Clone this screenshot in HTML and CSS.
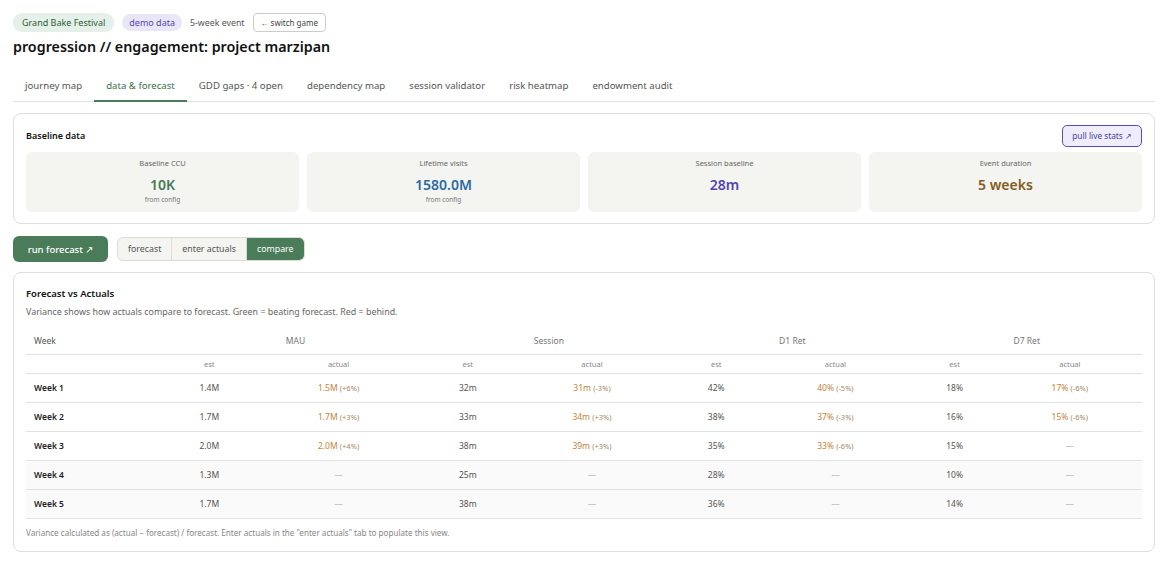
FILE: index.html
```html
<!DOCTYPE html>
<html lang='en'>
<head>
    <meta charset='UTF-8'>
    <title>Forecast</title>
    <link rel="stylesheet" href="styles.css">
</head>
<body>
    <div class='page'>
        <div class='meta-row'>
            <span class='pill pill-game'>Grand Bake Festival</span>
            <span class='pill pill-demo'>demo data</span>
            <span class='meta-text'>5-week event</span>
            <button class='switch-btn'>&larr; switch game</button>
        </div>
        <h1 class='title'>progression // engagement: project marzipan</h1>

        <div class='tabs'>
            <span class='tab'>journey map</span>
            <span class='tab active'>data &amp; forecast</span>
            <span class='tab'>GDD gaps &middot; 4 open</span>
            <span class='tab'>dependency map</span>
            <span class='tab'>session validator</span>
            <span class='tab'>risk heatmap</span>
            <span class='tab'>endowment audit</span>
        </div>

        <div class='card baseline'>
            <div class='card-head'>
                <span class='card-title'>Baseline data</span>
                <button class='live-btn'>pull live stats &#x2197;</button>
            </div>
            <div class='stats'>
                <div class='stat'>
                    <span class='stat-label'>Baseline CCU</span>
                    <span class='stat-value green'>10K</span>
                    <span class='stat-note'>from config</span>
                </div>
                <div class='stat'>
                    <span class='stat-label'>Lifetime visits</span>
                    <span class='stat-value blue'>1580.0M</span>
                    <span class='stat-note'>from config</span>
                </div>
                <div class='stat'>
                    <span class='stat-label'>Session baseline</span>
                    <span class='stat-value purple'>28m</span>
                </div>
                <div class='stat'>
                    <span class='stat-label'>Event duration</span>
                    <span class='stat-value brown'>5 weeks</span>
                </div>
            </div>
        </div>

        <div class='actions'>
            <button class='run-btn'>run forecast &#x2197;</button>
            <div class='segments'>
                <span class='segment'>forecast</span>
                <span class='segment'>enter actuals</span>
                <span class='segment active'>compare</span>
            </div>
        </div>

        <div class='card compare'>
            <div class='card-title'>Forecast vs Actuals</div>
            <p class='card-sub'>Variance shows how actuals compare to forecast. Green = beating forecast. Red = behind.</p>
            <table class='grid'>
                <colgroup>
                    <col class='c-week'>
                    <col class='c-est'><col class='c-mau'>
                    <col class='c-est'><col class='c-ses'>
                    <col class='c-est'><col class='c-d1'>
                    <col class='c-est'><col class='c-d7'>
                </colgroup>
                <thead>
                    <tr class='group-row'>
                        <th class='week-head'>Week</th>
                        <th colspan='2'>MAU</th>
                        <th colspan='2'>Session</th>
                        <th colspan='2'>D1 Ret</th>
                        <th colspan='2'>D7 Ret</th>
                    </tr>
                    <tr class='sub-row'>
                        <th></th>
                        <th>est</th><th>actual</th>
                        <th>est</th><th>actual</th>
                        <th>est</th><th>actual</th>
                        <th>est</th><th>actual</th>
                    </tr>
                </thead>
                <tbody>
                    <tr>
                        <td class='week'>Week 1</td>
                        <td>1.4M</td><td class='act'>1.5M <small>(+6%)</small></td>
                        <td>32m</td><td class='act'>31m <small>(-3%)</small></td>
                        <td>42%</td><td class='act'>40% <small>(-5%)</small></td>
                        <td>18%</td><td class='act'>17% <small>(-6%)</small></td>
                    </tr>
                    <tr>
                        <td class='week'>Week 2</td>
                        <td>1.7M</td><td class='act'>1.7M <small>(+3%)</small></td>
                        <td>33m</td><td class='act'>34m <small>(+3%)</small></td>
                        <td>38%</td><td class='act'>37% <small>(-3%)</small></td>
                        <td>16%</td><td class='act'>15% <small>(-6%)</small></td>
                    </tr>
                    <tr>
                        <td class='week'>Week 3</td>
                        <td>2.0M</td><td class='act'>2.0M <small>(+4%)</small></td>
                        <td>38m</td><td class='act'>39m <small>(+3%)</small></td>
                        <td>35%</td><td class='act'>33% <small>(-6%)</small></td>
                        <td>15%</td><td class='empty'>&mdash;</td>
                    </tr>
                    <tr class='pending'>
                        <td class='week'>Week 4</td>
                        <td>1.3M</td><td class='empty'>&mdash;</td>
                        <td>25m</td><td class='empty'>&mdash;</td>
                        <td>28%</td><td class='empty'>&mdash;</td>
                        <td>10%</td><td class='empty'>&mdash;</td>
                    </tr>
                    <tr class='pending'>
                        <td class='week'>Week 5</td>
                        <td>1.7M</td><td class='empty'>&mdash;</td>
                        <td>38m</td><td class='empty'>&mdash;</td>
                        <td>36%</td><td class='empty'>&mdash;</td>
                        <td>14%</td><td class='empty'>&mdash;</td>
                    </tr>
                </tbody>
            </table>
            <p class='card-foot'>Variance calculated as (actual &minus; forecast) / forecast. Enter actuals in the "enter actuals" tab to populate this view.</p>
        </div>
    </div>
</body>
</html>
```

FILE: styles.css
```css
* {
    margin: 0;
    padding: 0;
    box-sizing: border-box;
}

body {
    background: #fff;
    color: #222;
    font-family: "Noto Sans", "Open Sans", sans-serif;
}

.page {
    padding: 13px 11px 0 13px;
}

button {
    font-family: inherit;
    cursor: pointer;
}

.meta-row {
    display: flex;
    align-items: center;
    gap: 8px;
    height: 19px;
}

.pill {
    display: inline-flex;
    align-items: center;
    height: 17px;
    padding: 0 9px;
    border-radius: 9px;
    font-size: 9px;
}

.pill-game {
    background: #e5f1e8;
    color: #2f5a3b;
    height: 19px;
}

.pill-demo {
    background: #e9e6f8;
    color: #5747b0;
    padding: 0 7px;
}

.meta-text {
    font-size: 8.8px;
    color: #555;
}

.switch-btn {
    height: 19px;
    padding: 0 7px;
    border: 1px solid #ccc;
    border-radius: 4px;
    background: #fff;
    font-size: 8px;
    color: #444;
}

.title {
    margin-top: 5px;
    font-size: 14.3px;
    font-weight: 600;
    color: #111;
    line-height: 20px;
}

.tabs {
    display: flex;
    margin-top: 18px;
    border-bottom: 1px solid #e2e2e2;
}

.tab {
    padding: 4px 12px 8px;
    font-size: 9.65px;
    line-height: 13px;
    color: #555;
    border-bottom: 2px solid transparent;
    margin-bottom: -1px;
}

.tab.active {
    color: #3e6f4c;
    border-bottom-color: #4a7c59;
}

.card {
    border: 1px solid #dedede;
    border-radius: 8px;
    background: #fff;
}

.baseline {
    margin-top: 11px;
    padding: 10px 12px 11px 12px;
}

.card-head {
    display: flex;
    justify-content: space-between;
    align-items: center;
    height: 23px;
}

.card-title {
    font-size: 9px;
    font-weight: 600;
    line-height: 13px;
    color: #111;
}

.live-btn {
    height: 22px;
    padding: 0 9px;
    border: 1px solid #5a4bb8;
    border-radius: 5px;
    background: #efedfb;
    color: #4a3ea0;
    font-size: 8.3px;
}

.stats {
    display: grid;
    grid-template-columns: repeat(4, 1fr);
    gap: 8px;
    margin-top: 5px;
}

.stat {
    display: flex;
    flex-direction: column;
    align-items: center;
    height: 60px;
    padding-top: 6px;
    background: #f4f4f0;
    border-radius: 6px;
}

.stat-label {
    font-size: 7.5px;
    color: #666;
    line-height: 11px;
}

.stat-value {
    font-size: 14px;
    font-weight: 600;
    line-height: 20px;
    margin-top: 6px;
}

.stat-note {
    font-size: 6.5px;
    color: #777;
    line-height: 9px;
}

.green { color: #497a57; }
.blue { color: #2c6aa6; }
.purple { color: #5544b4; }
.brown { color: #855a1f; }

.actions {
    display: flex;
    align-items: center;
    gap: 9px;
    margin-top: 12px;
}

.run-btn {
    height: 26px;
    width: 95px;
    border: none;
    border-radius: 6px;
    background: #4a7c59;
    color: #fff;
    font-size: 9.5px;
    font-weight: 500;
}

.segments {
    display: flex;
    height: 24px;
    border: 1px solid #dcdcd6;
    border-radius: 6px;
    background: #f4f4f0;
    overflow: hidden;
}

.segment {
    display: flex;
    align-items: center;
    padding: 0 10px;
    font-size: 8.8px;
    color: #555;
    border-left: 1px solid #dcdcd6;
}

.segment:first-child {
    border-left: none;
}

.segment.active {
    background: #4a7c59;
    color: #fff;
}

.compare {
    margin-top: 10px;
    padding: 14px 12px 13px 12px;
}

.compare .card-title {
    font-size: 9.5px;
}

.card-sub {
    margin-top: 6px;
    font-size: 8.9px;
    line-height: 12px;
    color: #666;
}

.grid {
    width: 100%;
    margin-top: 12px;
    border-collapse: collapse;
    table-layout: fixed;
}

.c-week { width: 140px; }
.c-est { width: 86px; }
.c-mau { width: 172px; }
.c-ses { width: 162px; }
.c-d1 { width: 152px; }
.c-d7 { width: 144px; }

.grid th {
    font-weight: 400;
    text-align: center;
    color: #777;
    line-height: 12px;
}

.group-row th {
    height: 24px;
    padding-bottom: 1px;
    font-size: 8.5px;
    border-bottom: 1px solid #e2e2e2;
}

.group-row .week-head {
    text-align: left;
    padding-left: 8px;
    color: #555;
}

.sub-row th {
    height: 19px;
    font-size: 7.5px;
    color: #888;
    border-bottom: 1px solid #e2e2e2;
}

.grid td {
    height: 29px;
    text-align: center;
    font-size: 8.5px;
    line-height: 12px;
    color: #555;
    border-bottom: 1px solid #e2e2e2;
}

.grid td.week {
    text-align: left;
    padding-left: 8px;
    font-weight: 600;
    color: #222;
}

.grid td.act {
    color: #c2853c;
}

.act small {
    font-size: 7.5px;
    color: #a68a66;
}

.grid td.empty {
    color: #bbb;
}

.pending td {
    background: #fafafa;
}

.card-foot {
    margin-top: 8px;
    font-size: 8.1px;
    line-height: 11px;
    color: #888;
}
```
